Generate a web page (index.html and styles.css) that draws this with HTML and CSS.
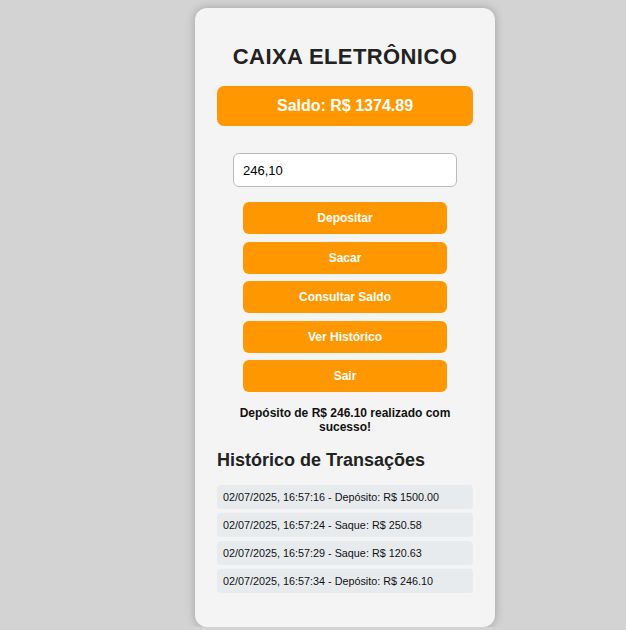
FILE: index.html
```html
<!DOCTYPE html>
<html lang="pt-BR">
<head>
<meta charset="utf-8">
<title>Caixa Eletrônico</title>
<link rel="stylesheet" href="styles.css">
</head>
<body>
<div class="atm">
  <h1 class="title">CAIXA ELETRÔNICO</h1>
  <div class="balance">Saldo: R$ 1374.89</div>
  <input class="amount" type="text" value="246,10">
  <div class="actions">
    <button class="btn">Depositar</button>
    <button class="btn">Sacar</button>
    <button class="btn">Consultar Saldo</button>
    <button class="btn">Ver Histórico</button>
    <button class="btn">Sair</button>
  </div>
  <p class="message">Depósito de R$ 246.10 realizado com sucesso!</p>
  <h2 class="history-title">Histórico de Transações</h2>
  <ul class="history">
    <li class="history-item">02/07/2025, 16:57:16 - Depósito: R$ 1500.00</li>
    <li class="history-item">02/07/2025, 16:57:24 - Saque: R$ 250.58</li>
    <li class="history-item">02/07/2025, 16:57:29 - Saque: R$ 120.63</li>
    <li class="history-item">02/07/2025, 16:57:34 - Depósito: R$ 246.10</li>
  </ul>
</div>
</body>
</html>
```

FILE: styles.css
```css
html, body {
  margin: 0;
  padding: 0;
}
body {
  background: #d3d3d3;
  font-family: "Liberation Sans", Arial, sans-serif;
  padding-top: 8px;
}
.atm {
  width: 256px;
  margin-left: 195px;
  padding: 22px 22px 34px;
  background: #f4f4f4;
  border-radius: 12px;
  box-shadow: 0 0 10px rgba(0, 0, 0, 0.25);
  display: flex;
  flex-direction: column;
}
.title {
  margin: 14px 0 16px;
  font-size: 22px;
  line-height: 26px;
  letter-spacing: 0.4px;
  text-align: center;
  color: #222;
}
.balance {
  background: #ff9800;
  color: #fff;
  font-weight: bold;
  font-size: 16px;
  height: 40px;
  line-height: 40px;
  text-align: center;
  border-radius: 7px;
}
.amount {
  box-sizing: border-box;
  width: 224px;
  height: 34px;
  margin: 27px auto 0;
  padding: 0 9px;
  border: 1px solid #bbb;
  border-radius: 6px;
  background: #fff;
  font-family: "Liberation Sans", Arial, sans-serif;
  font-size: 13px;
  color: #000;
}
.actions {
  display: flex;
  flex-direction: column;
  align-items: center;
  gap: 7.5px;
  margin-top: 15px;
}
.btn {
  width: 204px;
  height: 32px;
  border: none;
  border-radius: 6px;
  background: #ff9800;
  color: #fff;
  font-family: "Liberation Sans", Arial, sans-serif;
  font-weight: bold;
  font-size: 12px;
  padding: 0;
}
.message {
  max-width: 224px;
  margin: 14px auto 0;
  font-size: 12px;
  line-height: 14px;
  font-weight: bold;
  text-align: center;
  color: #111;
}
.history-title {
  margin: 16px 0 14px;
  font-size: 18px;
  line-height: 21px;
  color: #222;
}
.history {
  list-style: none;
  margin: 0;
  padding: 0;
  display: flex;
  flex-direction: column;
  gap: 4px;
}
.history-item {
  height: 24px;
  line-height: 24px;
  padding: 0 6px;
  background: #e8ebee;
  border-radius: 4px;
  font-size: 10.8px;
  color: #111;
}
```
